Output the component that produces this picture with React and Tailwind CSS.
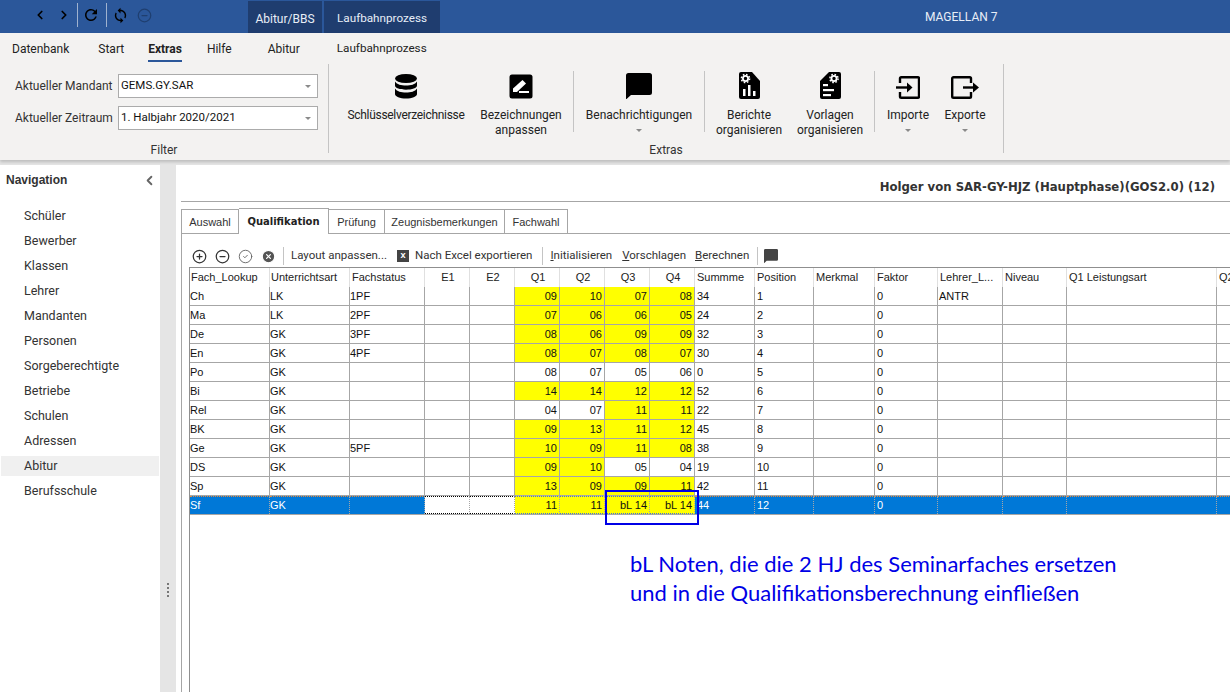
import { ChevronLeft, ChevronRight, MinusCircle, PlusCircle, CheckCircle2, XCircle } from 'lucide-react';
import { MdRefresh, MdSync } from 'react-icons/md';

const NAV = ['Schüler', 'Bewerber', 'Klassen', 'Lehrer', 'Mandanten', 'Personen', 'Sorgeberechtigte', 'Betriebe', 'Schulen', 'Adressen', 'Abitur', 'Berufsschule'];

const COLUMNS = [
  ['Fach_Lookup', 80, 'left'], ['Unterrichtsart', 80, 'left'], ['Fachstatus', 75, 'left'],
  ['E1', 45, 'center'], ['E2', 45, 'center'], ['Q1', 45, 'center'], ['Q2', 45, 'center'], ['Q3', 45, 'center'], ['Q4', 45, 'center'],
  ['Summme', 60, 'left'], ['Position', 59, 'left'], ['Merkmal', 61, 'left'], ['Faktor', 63, 'left'],
  ['Lehrer_L...', 65, 'left'], ['Niveau', 64, 'left'], ['Q1 Leistungsart', 150, 'left'], ['Q2', 60, 'left'],
];

// fach, art, status, Q1-Q4, gelb markierte Q, summe, lehrer
const ROWS = [
  ['Ch', 'LK', '1PF', ['09', '10', '07', '08'], [1, 1, 1, 1], '34', 'ANTR'],
  ['Ma', 'LK', '2PF', ['07', '06', '06', '05'], [1, 1, 1, 1], '24', ''],
  ['De', 'GK', '3PF', ['08', '06', '09', '09'], [1, 1, 1, 1], '32', ''],
  ['En', 'GK', '4PF', ['08', '07', '08', '07'], [1, 1, 1, 1], '30', ''],
  ['Po', 'GK', '', ['08', '07', '05', '06'], [0, 0, 0, 0], '0', ''],
  ['Bi', 'GK', '', ['14', '14', '12', '12'], [1, 1, 1, 1], '52', ''],
  ['Rel', 'GK', '', ['04', '07', '11', '11'], [0, 0, 1, 1], '22', ''],
  ['BK', 'GK', '', ['09', '13', '11', '12'], [1, 1, 1, 1], '45', ''],
  ['Ge', 'GK', '5PF', ['10', '09', '11', '08'], [1, 1, 1, 1], '38', ''],
  ['DS', 'GK', '', ['09', '10', '05', '04'], [1, 1, 0, 0], '19', ''],
  ['Sp', 'GK', '', ['13', '09', '09', '11'], [1, 1, 1, 1], '42', ''],
];

function Caret() {
  return <span className="block w-0 h-0 border-x-[3px] border-x-transparent border-t-[3px] border-t-[#8a8a8a]" />;
}

function DbIcon() {
  return (
    <svg width="24" height="25" viewBox="0 0 24 25" fill="#000">
      <ellipse cx="12" cy="4.5" rx="11" ry="4.5" />
      <path d="M1 7.500c2 3 6 4 11 4s9-1 11-4v4c0 2.500-5 4.200-11 4.200S1 14 1 11.500z" />
      <path d="M1 14.500c2 3 6 4 11 4s9-1 11-4v5.500c0 2.500-5 4.500-11 4.500S1 22.500 1 20z" />
    </svg>
  );
}

function EditIcon() {
  return (
    <svg width="24" height="25" viewBox="0 0 24 25">
      <rect x="0.500" y="0.500" width="23" height="24" rx="2.500" fill="#000" />
      <path d="M4 18v-3.500L13.500 6l3.500 3.500L8 18z" fill="#fff" />
      <rect x="10" y="17" width="10" height="2" fill="#fff" />
    </svg>
  );
}

function ChatIcon({ size = 26, fill = '#000' }) {
  return (
    <svg width={size} height={size} viewBox="0 0 26 26" fill={fill}>
      <path d="M2.500 0h21A2.500 2.500 0 0 1 26 2.500v17a2.500 2.500 0 0 1-2.500 2.500H5l-5 4.500V2.500A2.500 2.500 0 0 1 2.500 0z" />
    </svg>
  );
}

function Gear({ cx, cy }) {
  return (
    <g fill="none" stroke="#fff">
      <circle cx={cx} cy={cy} r="2.600" strokeWidth="1.800" />
      <circle cx={cx} cy={cy} r="4.100" strokeWidth="1.500" strokeDasharray="1.600 1.620" />
    </g>
  );
}

function ReportIcon() {
  return (
    <svg width="21" height="27" viewBox="0 0 21 27">
      <path d="M2 0h11l8 9v16a2 2 0 0 1-2 2H2a2 2 0 0 1-2-2V2a2 2 0 0 1 2-2z" fill="#000" />
      <Gear cx={6.500} cy={6.500} />
      <rect x="4" y="17" width="2.500" height="7" fill="#fff" />
      <rect x="9" y="13" width="2.500" height="11" fill="#fff" />
      <rect x="14" y="19" width="2.500" height="5" fill="#fff" />
    </svg>
  );
}

function TemplateIcon() {
  return (
    <svg width="21" height="27" viewBox="0 0 21 27">
      <path d="M9 0h10a2 2 0 0 1 2 2v23a2 2 0 0 1-2 2H2a2 2 0 0 1-2-2V9z" fill="#000" />
      <Gear cx={14} cy={6.500} />
      <rect x="3" y="12" width="5" height="2.200" fill="#fff" />
      <rect x="3" y="17" width="11" height="2.200" fill="#fff" />
      <rect x="3" y="22" width="8" height="2.200" fill="#fff" />
    </svg>
  );
}

function ImportIcon() {
  return (
    <svg width="24" height="23" viewBox="0 0 24 23" fill="none" stroke="#000" strokeWidth="2.400">
      <path d="M4 7V2.500A1.300 1.300 0 0 1 5.300 1.200h16.400A1.300 1.300 0 0 1 23 2.500v18a1.300 1.300 0 0 1-1.300 1.300H5.300A1.300 1.300 0 0 1 4 20.500V16" />
      <path d="M0 11.500h14" />
      <path d="M11 6.500l5.500 5-5.500 5z" fill="#000" stroke="none" />
    </svg>
  );
}

function ExportIcon() {
  return (
    <svg width="29" height="23" viewBox="0 0 29 23" fill="none" stroke="#000" strokeWidth="2.400">
      <path d="M20 7V2.500a1.300 1.300 0 0 0-1.300-1.300H2.500A1.300 1.300 0 0 0 1.200 2.500v18a1.300 1.300 0 0 0 1.300 1.300h16.200a1.300 1.300 0 0 0 1.300-1.300V16" />
      <path d="M12 11.500h12" />
      <path d="M22 6.500l6 5-6 5z" fill="#000" stroke="none" />
    </svg>
  );
}

function RibbonButton({ width, icon, lines, caret, labelClass = '' }) {
  return (
    <div className={`${width} flex flex-col items-center text-[12px] leading-[15px] text-[#222]`}>
      <div className="h-[30px] flex items-end justify-center">{icon}</div>
      <div className={`mt-[9px] text-center whitespace-nowrap ${labelClass}`}>
        {lines.map(l => <div key={l}>{l}</div>)}
      </div>
      {caret && <div className="mt-[6px]"><Caret /></div>}
    </div>
  );
}

function Select({ value }) {
  return (
    <div className="w-[200px] h-[24px] bg-white border border-[#ababab] flex items-center justify-between pl-[2px] pr-[6px] text-[11.500px] text-[#111]">
      <span>{value}</span>
      <Caret />
    </div>
  );
}

function GridCell({ children, width, className = '' }) {
  return (
    <div style={{ width }} className={`shrink-0 h-full border-r border-[#a6a6a6] flex items-center ${className}`}>
      {children}
    </div>
  );
}

function GridRow({ row }) {
  const [fach, art, status, q, marked, summe, lehrer] = row.data;
  const selected = row.selected;
  const base = selected ? 'bg-[#0078d7] text-white border-t border-dotted border-t-[#e8893a]' : '';
  const cell = (i, content, extra = '') => (
    <GridCell key={i} width={COLUMNS[i][1]} className={`${base} ${extra}`}>{content}</GridCell>
  );
  return (
    <div className="flex h-[19px] box-border border-b border-[#a6a6a6]">
      {cell(0, fach)}
      {cell(1, art)}
      {cell(2, status)}
      <GridCell width={45} className={selected ? 'bg-white border-y border-dotted border-y-black' : ''} />
      <GridCell width={45} className={selected ? 'bg-white border-y border-dotted border-y-black' : ''} />
      {q.map((v, i) => (
        <GridCell key={i} width={45} className={`justify-end pr-[2px] whitespace-pre ${marked[i] ? 'bg-[#ffff00]' : ''} ${selected ? 'border-y border-dotted border-y-[#3b6ee0]' : ''}`}>{v}</GridCell>
      ))}
      {cell(9, summe, 'pl-[2px]')}
      {cell(10, row.pos, 'pl-[2px]')}
      {cell(11, '')}
      {cell(12, '0', 'pl-[2px]')}
      {cell(13, lehrer, 'pl-[1px]')}
      {cell(14, '')}
      {cell(15, '')}
      {cell(16, '')}
    </div>
  );
}

export default function App() {
  const rows = ROWS.map((r, i) => ({ data: r, pos: String(i + 1) }));
  const sf = { data: ['Sf', 'GK', '', ['11', '11', 'bL 14', 'bL 14'], [1, 1, 1, 1], '44', ''], pos: '12', selected: true };

  return (
    <div className="relative w-[1230px] h-[692px] overflow-hidden bg-[#e5e5e5] font-['Roboto',sans-serif] text-[12px]">
      {/* Titelleiste */}
      <div className="h-[33px] bg-[#2b579a] flex items-stretch text-white">
        <div className="w-[248px] flex items-center pl-[33px]">
          <ChevronLeft size={14} strokeWidth={3} className="text-black mb-[3px]" />
          <ChevronRight size={14} strokeWidth={3} className="text-black ml-[10px] mb-[3px]" />
          <span className="ml-[6px] h-[24px] w-px bg-[#9fb2cf] mb-[3px]" />
          <MdRefresh size={18} className="text-black ml-[4px] mb-[3px]" />
          <span className="ml-[6px] h-[24px] w-px bg-[#9fb2cf] mb-[3px]" />
          <MdSync size={17} className="text-black ml-[5px] mb-[3px]" />
          <MinusCircle size={15} strokeWidth={2} className="text-[#1f3f70] ml-[8px] mb-[3px]" />
        </div>
        <div className="mt-[1px] w-[74px] pt-[3px] bg-[#1f3d6f] flex items-center justify-center text-[12px] text-[#e8eef7]">Abitur/BBS</div>
        <div className="mt-[1px] ml-[2px] w-[116px] pt-[3px] bg-[#1f3d6f] flex items-center justify-center text-[11.700px] text-[#e8eef7]">Laufbahnprozess</div>
        <div className="ml-[485px] pt-[8px] text-[12px] text-[#e8eef7]">MAGELLAN 7</div>
      </div>

      {/* Menü */}
      <div className="h-[127px] bg-[#f3f2f1] shadow-[0_2px_3px_rgba(0,0,0,0.18)] relative">
        <div className="h-[30px] flex text-[12px] text-[#222]">
          <span className="ml-[12px] mt-[7px]">Datenbank</span>
          <span className="ml-[29px] mt-[7px]">Start</span>
          <span className="ml-[24px] h-[29px] pt-[7px] font-bold border-b-[2px] border-[#2b579a]">Extras</span>
          <span className="ml-[25px] mt-[7px]">Hilfe</span>
          <span className="ml-[36px] mt-[7px]">Abitur</span>
          <span className="ml-[37px] mt-[7px] text-[11.700px]">Laufbahnprozess</span>
        </div>
        <div className="flex h-[90px] mt-[1px]">
          {/* Filter */}
          <div className="w-[328px] pt-[10px] flex flex-col">
            <div className="flex items-center pl-[15px] gap-[4px]">
              <span className="w-[99px] whitespace-nowrap text-[#333]">Aktueller Mandant</span>
              <Select value="GEMS.GY.SAR" />
            </div>
            <div className="flex items-center pl-[15px] gap-[4px] mt-[8px]">
              <span className="w-[99px] whitespace-nowrap text-[#333]">Aktueller Zeitraum</span>
              <Select value="1. Halbjahr 2020/2021" />
            </div>
            <div className="mt-[11px] text-center text-[#333]">Filter</div>
          </div>
          <span className="w-px h-[89px] bg-[#c4c4c4]" />

          {/* Extras */}
          <div className="w-[674px] relative">
            <div className="flex items-start h-[77px] pl-[8px] pt-[5px]">
              <RibbonButton width="w-[138px]" icon={<DbIcon />} lines={['Schlüsselverzeichnisse']} labelClass="tracking-[-0.3px]" />
              <RibbonButton width="w-[92px]" icon={<EditIcon />} lines={['Bezeichnungen', 'anpassen']} />
              <span className="ml-[6px] w-px h-[61px] mt-[2px] bg-[#c4c4c4]" />
              <RibbonButton width="w-[130px]" icon={<ChatIcon />} lines={['Benachrichtigungen']} caret />
              <span className="w-px h-[61px] mt-[2px] bg-[#c4c4c4]" />
              <RibbonButton width="w-[88px]" icon={<ReportIcon />} lines={['Berichte', 'organisieren']} />
              <RibbonButton width="w-[74px]" icon={<TemplateIcon />} lines={['Vorlagen', 'organisieren']} />
              <span className="ml-[7px] w-px h-[61px] mt-[2px] bg-[#c4c4c4]" />
              <RibbonButton width="w-[66px]" icon={<ImportIcon />} lines={['Importe']} caret />
              <RibbonButton width="w-[48px]" icon={<ExportIcon />} lines={['Exporte']} caret />
            </div>
            <div className="text-center text-[#333]">Extras</div>
          </div>
          <span className="w-px h-[89px] bg-[#c4c4c4]" />
        </div>
      </div>

      <div className="flex h-[532px]">
        {/* Navigation */}
        <div className="w-[160px] mt-[5px] bg-white shrink-0">
          <div className="flex items-center justify-between pl-[6px] pr-[3px] pt-[6px] text-[#333]">
            <span className="font-bold font-['Liberation_Sans',sans-serif] text-[12px]">Navigation</span>
            <ChevronLeft size={15} strokeWidth={3} className="text-[#666]" />
          </div>
          <div className="mt-[17px] pl-[1px]">
            {NAV.map(n => (
              <div key={n} className={`h-[20px] mb-[5px] w-[158px] pl-[23px] flex items-center text-[12.500px] text-[#333] ${n === 'Abitur' ? 'bg-[#f0f0f0]' : ''}`}>{n}</div>
            ))}
          </div>
        </div>

        {/* Griff */}
        <div className="w-[16px] shrink-0 flex justify-center pt-[423px]">
          <div className="flex flex-col gap-[2px] h-[16px]">
            <span className="w-[2px] h-[2px] bg-[#777]" />
            <span className="w-[2px] h-[2px] bg-[#777]" />
            <span className="w-[2px] h-[2px] bg-[#777]" />
            <span className="w-[2px] h-[2px] bg-[#777]" />
          </div>
        </div>

        {/* Inhalt */}
        <div className="flex-1 mt-[5px] bg-white overflow-hidden">
          <div className="h-[37px] border-b border-[#a6a6a6] ml-[5px] flex items-center justify-end pr-[15px] pt-[10px] font-bold font-['DejaVu_Sans',sans-serif] text-[11.700px] text-[#333] whitespace-nowrap">
            Holger von SAR-GY-HJZ (Hauptphase)(GOS2.0) (12)
          </div>

          <div className="flex items-end h-[31px] ml-[5px] text-[#333] font-['Liberation_Sans',sans-serif] text-[11px]">
            <div className="h-[24px] w-[58px] border border-[#a6a6a6] border-b-0 flex items-center justify-center pt-[2px]">Auswahl</div>
            <div className="h-[26px] w-[90px] border border-[#a6a6a6] border-b-0 border-l-0 bg-white flex items-center justify-center font-bold font-['DejaVu_Sans',sans-serif] text-[10px] text-[#222] relative top-px z-10">Qualifikation</div>
            <div className="h-[24px] w-[56px] border border-[#a6a6a6] border-b-0 border-l-0 flex items-center justify-center pt-[2px]">Prüfung</div>
            <div className="h-[24px] w-[120px] border border-[#a6a6a6] border-b-0 border-l-0 flex items-center justify-center pt-[2px]">Zeugnisbemerkungen</div>
            <div className="h-[24px] w-[63px] border border-[#a6a6a6] border-b-0 border-l-0 flex items-center justify-center pt-[2px]">Fachwahl</div>
          </div>

          <div className="ml-[5px] h-[459px] border-t border-l border-[#a6a6a6] pl-[7px]">
            {/* Werkzeugleiste */}
            <div className="h-[33px] flex items-center pt-[11px] text-[#333] text-[11.500px]">
              <PlusCircle size={15} className="text-[#333] ml-[3px]" />
              <MinusCircle size={15} className="text-[#333] ml-[8px]" />
              <CheckCircle2 size={15} className="text-[#666] ml-[8px]" strokeWidth={1.500} />
              <XCircle size={15} fill="#555" className="text-white ml-[8px]" />
              <span className="ml-[7px] w-px h-[18px] bg-[#c4c4c4]" />
              <span className="ml-[7px]">Layout anpassen...</span>
              <span className="ml-[10px] w-[12px] h-[12px] bg-[#444] text-white text-[8px] font-bold flex items-center justify-center">X</span>
              <span className="ml-[6px]">Nach Excel exportieren</span>
              <span className="ml-[10px] w-px h-[18px] bg-[#c4c4c4]" />
              <span className="ml-[7px]"><u>I</u>nitialisieren</span>
              <span className="ml-[10px]"><u>V</u>orschlagen</span>
              <span className="ml-[9px]"><u>B</u>erechnen</span>
              <span className="ml-[8px] w-px h-[18px] bg-[#c4c4c4]" />
              <span className="ml-[6px]"><ChatIcon size={14} fill="#444" /></span>
            </div>

            {/* Tabelle */}
            <div className="w-[1100px] h-[426px] border-l border-t border-[#8f8f8f] font-['Liberation_Sans',sans-serif] text-[11px] text-[#111]">
              <div className="flex h-[19px] text-[#222]">
                {COLUMNS.map(([label, width, align], i) => (
                  <div key={i} style={{ width }} className={`shrink-0 border-r border-[#e0e0e0] whitespace-nowrap flex items-center ${i < 2 ? 'pl-[1px]' : 'pl-[2px]'} ${align === 'center' ? 'justify-center' : ''}`}>{label}</div>
                ))}
              </div>
              {rows.map(r => <GridRow key={r.data[0]} row={r} />)}
              <GridRow row={sf} />
            </div>
          </div>
        </div>
      </div>

      {/* Anmerkung */}
      <div className="absolute left-[605px] top-[490px] w-[94px] h-[35px] border-[2px] border-[#0000e6]" />
      <div className="absolute left-[630px] top-[549px] font-['Lato',sans-serif] text-[22px] leading-[29px] text-[#0000e6] whitespace-nowrap">
        <div>bL Noten, die die 2 HJ des Seminarfaches ersetzen</div>
        <div>und in die Qualifikationsberechnung einfließen</div>
      </div>
    </div>
  );
}
